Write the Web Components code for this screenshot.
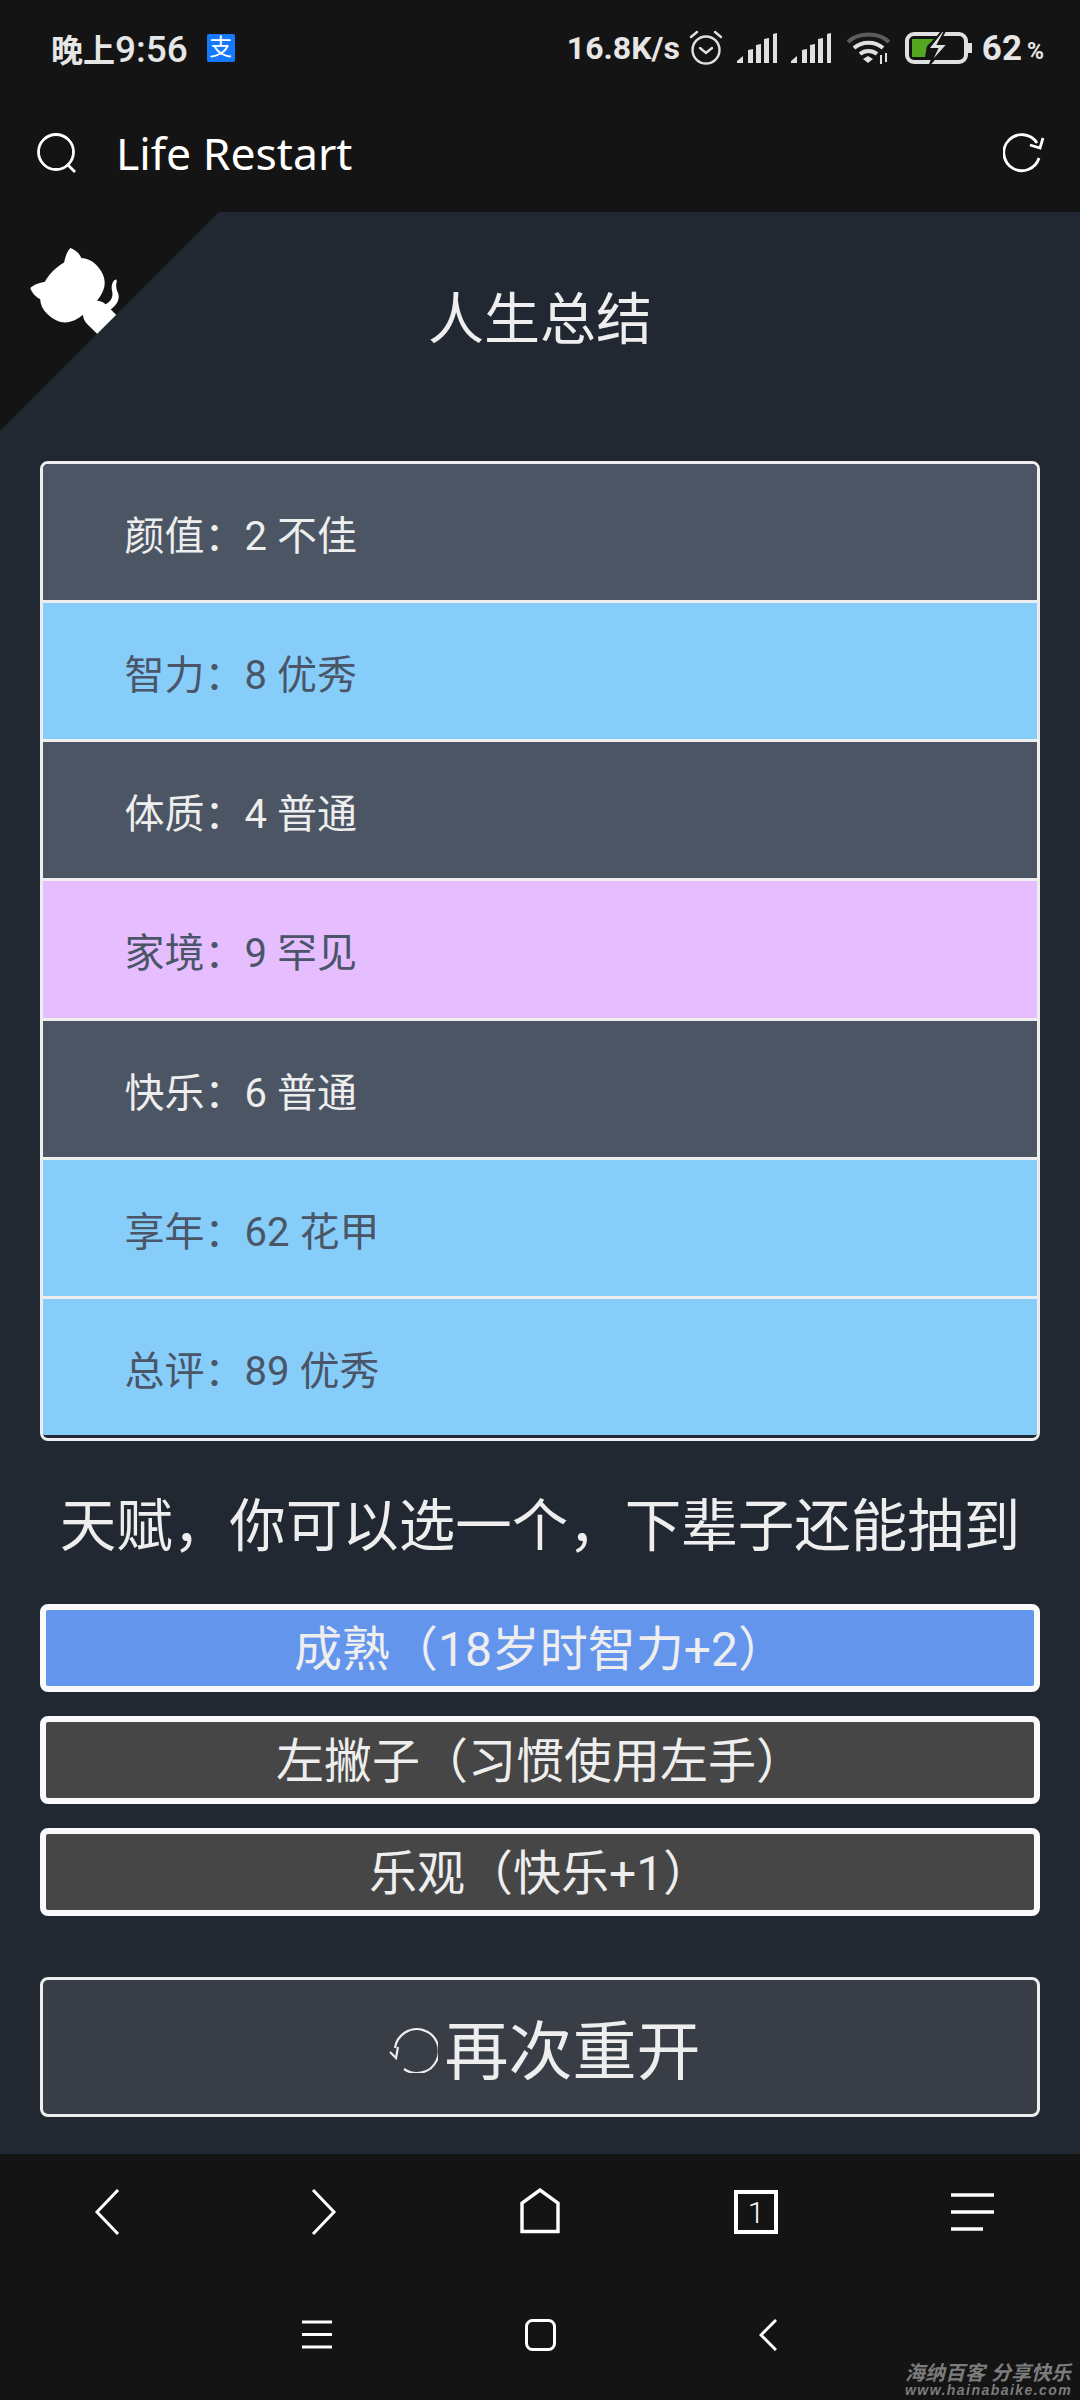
<!DOCTYPE html>
<html lang="zh-CN">
<head>
<meta charset="utf-8">
<title>Life Restart</title>
<style>
  html, body { margin: 0; padding: 0; background: #141414; }
  body { font-family: Roboto, "Noto Sans CJK SC", sans-serif; color: #eeeeee; }
</style>
</head>
<body>

<app-shell>
  <status-bar slot="top"></status-bar>
  <browser-toolbar slot="top" label="Life Restart"></browser-toolbar>

  <corner-badge slot="main"></corner-badge>
  <page-title slot="main">人生总结</page-title>
  <attr-list slot="main">
    <attr-row>颜值：2 不佳</attr-row>
    <attr-row tone="blue">智力：8 优秀</attr-row>
    <attr-row>体质：4 普通</attr-row>
    <attr-row tone="purple">家境：9 罕见</attr-row>
    <attr-row>快乐：6 普通</attr-row>
    <attr-row tone="blue">享年：62 花甲</attr-row>
    <attr-row tone="blue">总评：89 优秀</attr-row>
  </attr-list>
  <talent-list slot="main" heading="天赋，你可以选一个，下辈子还能抽到">
    <talent-btn selected>成熟（18岁时智力+2）</talent-btn>
    <talent-btn>左撇子（习惯使用左手）</talent-btn>
    <talent-btn>乐观（快乐+1）</talent-btn>
  </talent-list>
  <restart-btn slot="main">再次重开</restart-btn>

  <browser-nav slot="bottom"></browser-nav>
  <system-nav slot="bottom"></system-nav>
</app-shell>

<script>
(function () {
    'use strict';

    function define(name, html, extra) {
        class El extends HTMLElement {
            constructor() {
                super();
                this.attachShadow({ mode: 'open' }).innerHTML = html;
            }
            connectedCallback() {
                if (extra) extra(this);
            }
        }
        customElements.define(name, El);
    }

    define('app-shell', `
    <style>
      :host { display: flex; flex-direction: column; width: 1080px; height: 2400px; overflow: hidden; position: relative; background: #141414; }
      .main { position: relative; height: 1942px; background: #222831; padding: 0 40px; box-sizing: border-box; display: flex; flex-direction: column; }
      .watermark { position: absolute; left: 905px; top: 2363px; color: #7c7c7c; font-style: italic; font-weight: 700; white-space: nowrap; }
      .wm1 { font-size: 20px; line-height: 21px; word-spacing: 1px; }
      .wm2 { font-family: "Liberation Sans", sans-serif; font-size: 14px; line-height: 13px; letter-spacing: 1.45px; }
    </style>
    <slot name="top"></slot>
    <div class="main"><slot name="main"></slot></div>
    <slot name="bottom"></slot>
    <div class="watermark"><div class="wm1">海纳百客 分享快乐</div><div class="wm2">www.hainabaike.com</div></div>
    `);

    define('status-bar', `
    <style>
      :host { display: flex; align-items: center; height: 100px; padding: 0 36px 4px 51px; box-sizing: border-box; color: #e6e6e6; font: 700 32px Roboto, "Noto Sans CJK SC", sans-serif; }
      .time b { font-size: 37px; font-weight: 500; }
      .pay { display: flex; align-items: center; justify-content: center; width: 28px; height: 28px; margin-left: 19px; background: #1677ff; border-radius: 2px; color: #fff; font-size: 23px; font-weight: 400; line-height: 28px; }
      .right { margin-left: auto; display: flex; align-items: center; }
      svg { display: block; flex: none; }
      .speed { width: 112px; margin-right: 1px; white-space: nowrap; }
      .num { font-size: 35px; margin-left: 9px; }
      .pct { font-size: 23px; margin-left: 5px; margin-top: 6px; }
    </style>
    <span class="time">晚上<b>9:56</b></span>
    <span class="pay">支</span>
    <div class="right">
      <span class="speed">16.8K/s</span>
      <svg style="margin-left:9px" width="34" height="36" viewBox="0 0 34 36" fill="none" stroke="#e0e0e0" stroke-width="2.4"><circle cx="17" cy="20" r="13.5"/><path d="M11 18l6 5 6-5M2 7l6-5M32 7l-6-5" stroke-linecap="round"/></svg>
      <svg style="margin-left:14px" width="40" height="30" viewBox="0 0 40 30" fill="#e0e0e0"><path d="M0 30v-2l6-5v7zM11 30V17l5-1v14zM19 30V12l5-1v19zM27 30V6l5-1v25zM36 30V1l4-1v30z"/></svg>
      <svg style="margin-left:14px" width="40" height="30" viewBox="0 0 40 30" fill="#e0e0e0"><path d="M0 30v-2l6-5v7zM11 30V17l5-1v14zM19 30V12l5-1v19zM27 30V6l5-1v25zM36 30V1l4-1v30z"/></svg>
      <svg style="margin-left:16px" width="43" height="34" viewBox="0 0 43 34" fill="none" stroke-width="4"><path d="M1 11C11 1 32 1 42 11" stroke="#5c5c5c"/><path d="M7 17c8-7 21-7 29 0M13 23c5-4 12-4 17 0" stroke="#e0e0e0"/><path d="M16 28l5-3 5 3-5 4z" fill="#e0e0e0" stroke="none"/><path d="M34 24v9M39 22v9" stroke="#e0e0e0" stroke-width="2"/></svg>
      <svg style="margin-left:15px" width="68" height="32" viewBox="0 0 68 32" fill="none"><rect x="2" y="2" width="59" height="28" rx="7" stroke="#e0e0e0" stroke-width="4"/><path d="M7 7h22l-7 7 -2 11H7z" fill="#54a81f"/><path d="M65 11v10" stroke="#e0e0e0" stroke-width="4"/><path d="M37 -1L23 17h9l-7 15 18-20h-10l7-13z" fill="#e0e0e0" stroke="#141414" stroke-width="2"/></svg>
      <span class="num">62</span><span class="pct">%</span>
    </div>
    `);

    define('browser-toolbar', `
    <style>
      :host { display: flex; align-items: center; height: 112px; padding: 0 35px 6px 37px; box-sizing: border-box; color: #fff; }
      .label { margin-left: 38px; font: 400 44.5px "Noto Sans", Roboto, sans-serif; line-height: 60px; }
      svg { display: block; flex: none; }
      .reload { margin-left: auto; }
    </style>
    <svg width="41" height="41" viewBox="0 0 41 41" fill="none" stroke="#fff" stroke-width="2.8"><circle cx="19" cy="19" r="17.5"/><path d="M30 31l8 8"/></svg>
    <span class="label"></span>
    <svg class="reload" width="42" height="42" viewBox="0 0 42 42" fill="none" stroke="#fff" stroke-width="2.8"><path d="M36 26a18 18 0 1 1-2-15"/><path d="M40 6l-3 10-10-3"/></svg>
    `, el => {
        el.shadowRoot.querySelector('.label').textContent = el.getAttribute('label');
    });

    define('corner-badge', `
    <style>
      :host { display: block; position: absolute; left: 0; top: 0; width: 225px; height: 225px; clip-path: polygon(0 0, 219px 0, 0 219px); }
      svg { display: block; }
    </style>
    <svg width="225" height="225" viewBox="0 0 250 250">
      <g transform="translate(250,0) scale(-1,1)">
        <path fill="#141414" d="M0 0L250 250V0Z"/>
        <path fill="#fff" d="M128.3,109.0 C113.8,99.7 119.0,89.6 119.0,89.6 C122.0,82.7 120.5,78.6 120.5,78.6 C119.2,72.0 123.4,76.3 123.4,76.3 C127.3,80.9 125.5,87.3 125.5,87.3 C122.9,97.6 130.6,101.9 134.4,103.2"/>
        <path fill="#fff" d="M115.0,115.0 C114.9,115.1 118.7,116.5 119.8,115.4 L133.7,101.6 C136.9,99.2 139.9,98.4 142.2,98.6 C133.8,88.0 127.5,74.4 143.8,58.0 C148.5,53.4 154.0,51.2 159.7,51.0 C160.3,49.4 163.2,43.6 171.4,40.1 C171.4,40.1 176.1,42.5 178.8,56.2 C183.1,58.6 187.2,61.8 190.9,65.4 C194.5,69.0 197.7,73.2 200.1,77.6 C213.8,80.2 216.3,84.9 216.3,84.9 C212.7,93.1 206.9,96.0 205.4,96.6 C205.1,102.4 203.0,107.8 198.3,112.5 C181.9,128.9 168.3,122.5 157.7,114.1 C157.9,116.9 156.7,120.9 152.7,124.9 L141.0,136.5 C139.8,137.7 141.6,141.9 141.8,141.8 Z"/>
      </g>
    </svg>
    `);

    define('page-title', `
    <style>
      :host { display: block; height: 249px; padding-top: 68px; box-sizing: border-box; text-align: center; font-size: 56px; line-height: 80px; color: #eeeeee; }
    </style>
    <slot></slot>
    `);

    define('attr-list', `
    <style>
      :host { display: flex; flex-direction: column; border: 3px solid #eeeeee; border-radius: 8px; overflow: hidden; box-sizing: border-box; }
    </style>
    <slot></slot>
    `);

    define('attr-row', `
    <style>
      :host { display: flex; align-items: center; height: 139.14px; padding: 2px 0 0 81.5px; box-sizing: border-box; font-size: 40px; background: #4b5563; color: #eeeeee; border-bottom: 3px solid #eeeeee; }
      :host([tone="blue"]) { background: #87cdfa; color: #4a5568; }
      :host([tone="purple"]) { background: #e6beff; color: #4a5568; }
      :host(:last-child) { border-bottom-color: #222831; }
    </style>
    <slot></slot>
    `);

    define('talent-list', `
    <style>
      :host { display: flex; flex-direction: column; gap: 24px; }
      h2 { margin: 0 0 -24px; height: 163px; padding-top: 46px; box-sizing: border-box; font-size: 56.5px; font-weight: 400; line-height: 80px; text-align: center; white-space: nowrap; color: #eeeeee; }
    </style>
    <h2></h2>
    <slot></slot>
    `, el => {
        el.shadowRoot.querySelector('h2').textContent = el.getAttribute('heading');
    });

    define('talent-btn', `
    <style>
      :host { display: flex; align-items: center; justify-content: center; height: 88px; padding-bottom: 5px; border: 6px solid #f7f9fb; border-radius: 8px; box-sizing: border-box; background: #464646; color: #eeeeee; font-size: 48px; white-space: nowrap; }
      :host([selected]) { background: #6495ed; }
    </style>
    <slot></slot>
    `);

    define('restart-btn', `
    <style>
      :host { display: flex; align-items: center; justify-content: center; height: 140px; margin-top: 61px; padding: 0 0 2px 8px; border: 3px solid #eeeeee; border-radius: 8px; box-sizing: border-box; background: #393e46; color: #eeeeee; font-size: 64px; }
      svg { display: block; flex: none; margin-right: 7px; margin-top: 6px; }
    </style>
    <svg width="50" height="48" viewBox="0 0 50 48" fill="none" stroke="#eeeeee" stroke-width="2.2"><path d="M16 44A22 22 0 1 0 7 23"/><path d="M2 27l6 6 2-11"/></svg>
    <slot></slot>
    `);

    define('browser-nav', `
    <style>
      :host { display: block; position: relative; height: 126px; }
      svg { position: absolute; display: block; }
    </style>
    <svg style="left:94px;top:35px" width="26" height="46" viewBox="0 0 26 46" fill="none" stroke="#fff" stroke-width="3"><path d="M24 1L3 23l21 22"/></svg>
    <svg style="left:311px;top:35px" width="26" height="46" viewBox="0 0 26 46" fill="none" stroke="#fff" stroke-width="3"><path d="M2 1l21 22L2 45"/></svg>
    <svg style="left:519px;top:34px" width="42" height="47" viewBox="0 0 42 47" fill="none" stroke="#fff" stroke-width="3.4"><path d="M3 43.500V15L21 2l18 13v28.500z"/></svg>
    <svg style="left:734px;top:36px" width="44" height="44" viewBox="0 0 44 44" fill="none" stroke="#fff" stroke-width="4"><rect x="2" y="2" width="40" height="40"/></svg>
    <span style="position:absolute;left:734px;top:36px;width:44px;height:44px;display:flex;align-items:center;justify-content:center;font:300 30px Roboto,sans-serif;color:#fff">1</span>
    <svg style="left:951px;top:39px" width="43" height="38" viewBox="0 0 43 38" fill="none" stroke="#fff" stroke-width="3.4"><path d="M0 2h43M0 19h43M0 36h32"/></svg>
    `);

    define('system-nav', `
    <style>
      :host { display: block; position: relative; height: 120px; }
      svg { position: absolute; display: block; }
    </style>
    <svg style="left:302px;top:40px" width="30" height="29" viewBox="0 0 30 29" fill="none" stroke="#fff" stroke-width="3"><path d="M0 2h30M0 14.500h30M0 27h30"/></svg>
    <svg style="left:525px;top:39px" width="31" height="32" viewBox="0 0 31 32" fill="none" stroke="#fff" stroke-width="3"><rect x="1.5" y="1.5" width="28" height="29" rx="6"/></svg>
    <svg style="left:759px;top:39px" width="18" height="32" viewBox="0 0 18 32" fill="none" stroke="#fff" stroke-width="3"><path d="M17 1L2 16l15 15"/></svg>
    `);
})();
</script>
</body>
</html>
